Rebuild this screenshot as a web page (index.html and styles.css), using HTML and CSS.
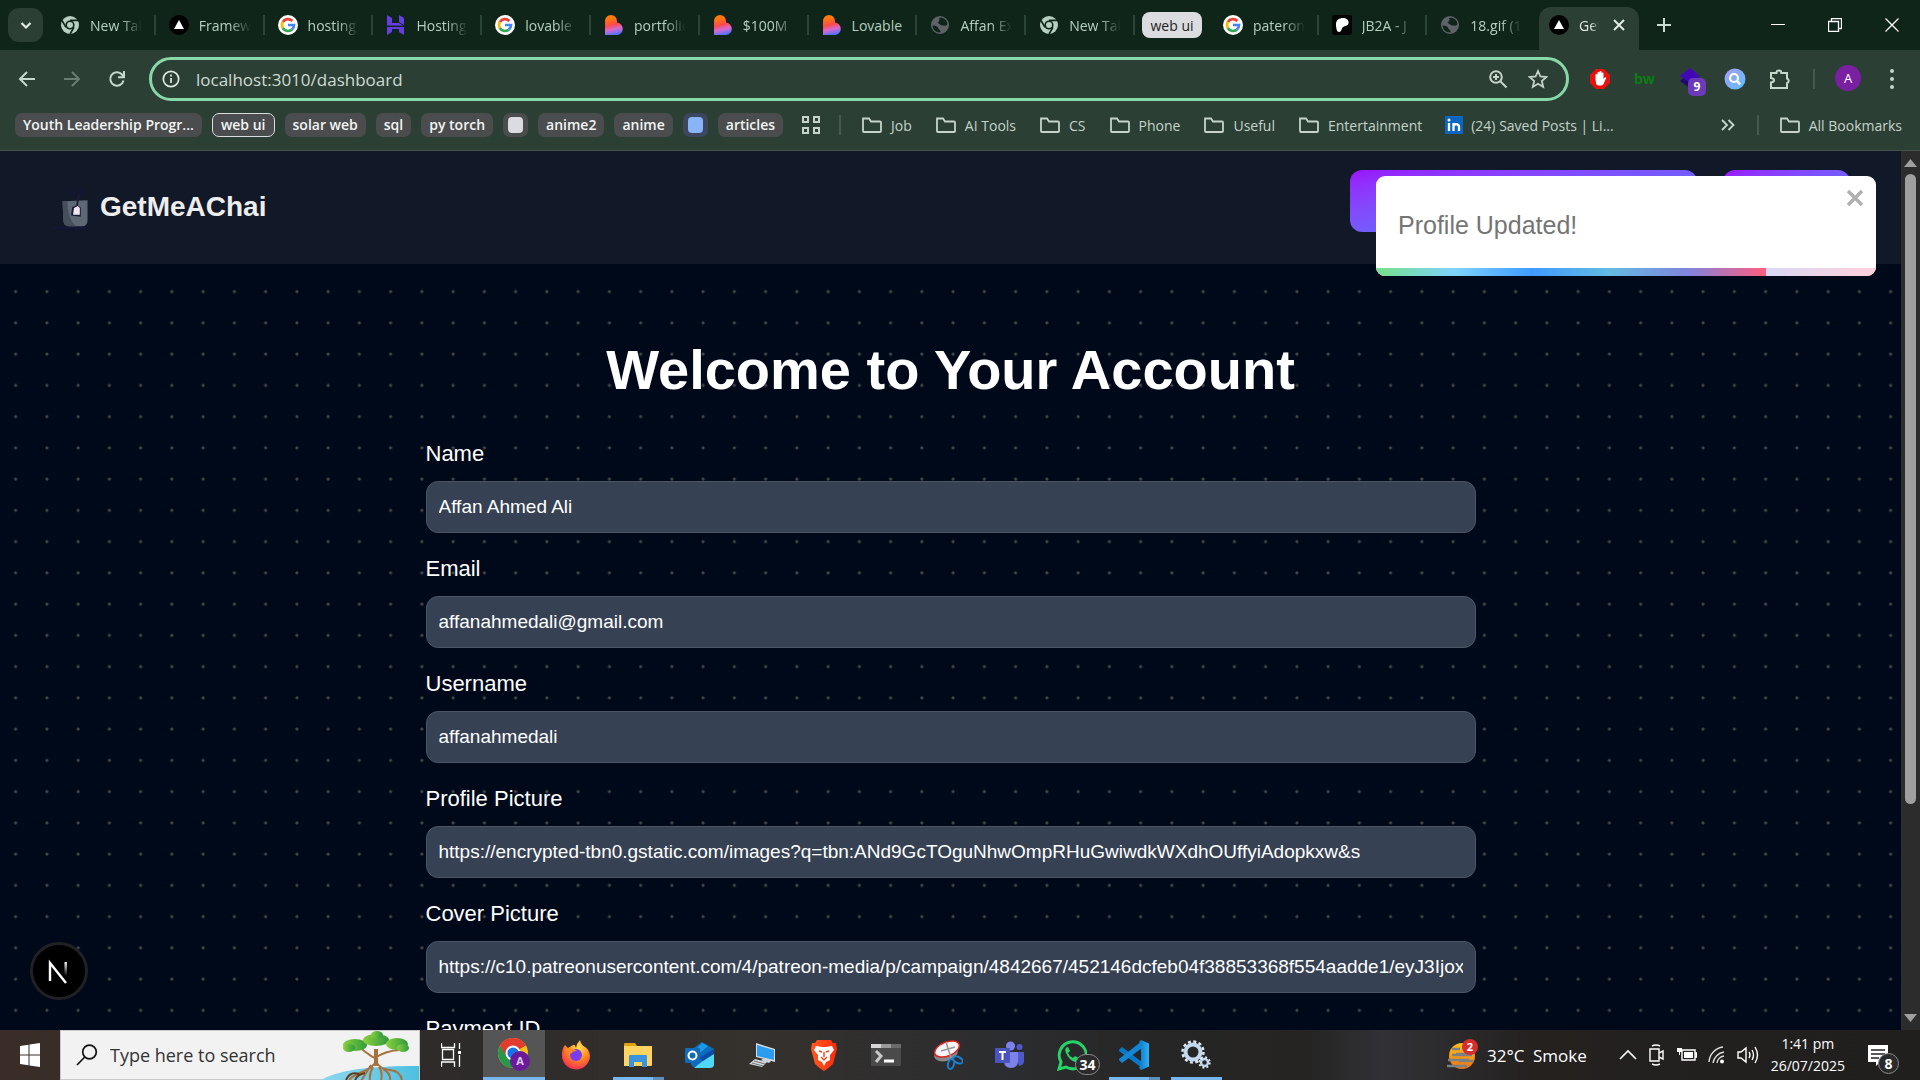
FILE: index.html
```html
<!DOCTYPE html>
<html lang="en">
<head>
<meta charset="utf-8">
<title>GetMeAChai - Dashboard</title>
<link rel="stylesheet" href="styles.css">
</head>
<body>
<svg class="sprite" aria-hidden="true">
  <defs>
    <linearGradient id="lov" x1="0.3" y1="0" x2="0.5" y2="1"><stop offset="0.15" stop-color="#ff7a0a"/><stop offset="0.5" stop-color="#fc4a4f"/><stop offset="0.72" stop-color="#d86ad0"/><stop offset="1" stop-color="#4f73ff"/></linearGradient>
    <linearGradient id="tree" x1="0" x2="1"><stop offset="0" stop-color="#8bd040"/><stop offset="1" stop-color="#2f9a3c"/></linearGradient>
    <linearGradient id="water" x1="0" x2="1"><stop offset="0" stop-color="#8fd8ee"/><stop offset="1" stop-color="#4ebfe0"/></linearGradient>
    <radialGradient id="fox" cx="0.6" cy="0.25" r="0.8"><stop offset="0" stop-color="#ffe14a"/><stop offset="0.5" stop-color="#ff8a1f"/><stop offset="1" stop-color="#f5265a"/></radialGradient>
    <linearGradient id="brave" x1="0" x2="1"><stop offset="0" stop-color="#ff5a1f"/><stop offset="1" stop-color="#f92a0c"/></linearGradient>
    <linearGradient id="vs" x1="0" x2="1"><stop offset="0" stop-color="#0a78c8"/><stop offset="1" stop-color="#2fb0f5"/></linearGradient>
    <linearGradient id="sun" x1="0" y1="0" x2="0" y2="1"><stop offset="0" stop-color="#ffc31a"/><stop offset="1" stop-color="#f0720c"/></linearGradient>
    <linearGradient id="orb" x1="0" y1="0" x2="1" y2="1"><stop offset="0" stop-color="#a89bf2"/><stop offset="1" stop-color="#5cc0ff"/></linearGradient>
    <linearGradient id="nfade" x1="0" y1="0" x2="0" y2="1"><stop offset="0" stop-color="#fff"/><stop offset="1" stop-color="#fff" stop-opacity="0"/></linearGradient>
  </defs>
  <symbol id="i-chrome" viewBox="0 0 20 20"><circle cx="10" cy="10" r="9" fill="#b6cfbf"/><circle cx="10" cy="10" r="4.600" fill="#0f251a"/><circle cx="10" cy="10" r="3" fill="#b6cfbf"/><path d="M10 5.400h8M6 12.300 2 5.500M14 12.300 10 19" stroke="#0f251a" stroke-width="1.600"/></symbol>
  <symbol id="i-vercel" viewBox="0 0 20 20"><circle cx="10" cy="10" r="10"/><path d="M10 5l5 9H5z" fill="#fff"/></symbol>
  <symbol id="i-google" viewBox="0 0 20 20"><circle cx="10" cy="10" r="10" fill="#fff"/><g fill="none" stroke-width="2.700"><path d="M14.400 6A6 6 0 0 0 4.800 7" stroke="#ea4335"/><path d="M4.800 7a6 6 0 0 0 0 6" stroke="#fbbc05"/><path d="M4.800 13a6 6 0 0 0 9 1.600" stroke="#34a853"/><path d="M13.800 14.600A6 6 0 0 0 16 10h-6" stroke="#4285f4"/></g></symbol>
  <symbol id="i-hostinger" viewBox="0 0 20 20"><path d="M1 0l5 3v5h7l5 3H1zM13 0l5 3v7l-5-3zM1 20v-8h13l4 0v8l-5-3v-3H6l0 3z" fill="#673de6"/><path d="M0 11.300h20" stroke="#0f251a" stroke-width="1.500"/></symbol>
  <symbol id="i-lovable" viewBox="0 0 20 20"><path d="M1 20V6a6 6 0 0 1 12 0v1.500A6.300 6.300 0 0 1 13.500 20z" fill="url(#lov)"/></symbol>
  <symbol id="i-globe" viewBox="0 0 20 20"><circle cx="10" cy="10" r="9" fill="#5f6368"/><path d="M2.600 10.500c2 0 5 .5 5.500 2.500s2.500 1 2.500 4.300c-4 .7-8-2.300-8-6.800zM9 3c4-1 8 1.500 8.400 6-1.500 3-2.400 1-4.400 1.500S9.500 9 8 8s3-1.500 1-5z" fill="#0f251a"/></symbol>
  <symbol id="i-patreon" viewBox="0 0 20 20"><rect width="20" height="20" rx="2" fill="#050505"/><path d="M4 9c0-4 3.500-6 7-6 3 0 5.600 1.500 5.600 4.500 0 4-4.600 3-6.100 5C9.500 14 9.500 17 7 17S4 12 4 9z" fill="#fff"/></symbol>
  <symbol id="i-folder" viewBox="0 0 22 20"><path d="M2 3.500h6l2 3h9a1 1 0 0 1 1 1V16a1 1 0 0 1-1 1H3a1 1 0 0 1-1-1z" fill="none" stroke="#c5d3c9" stroke-width="1.800"/></symbol>
</svg>

<header class="browser">
  <div class="tabstrip">
    <button class="tab-search" aria-label="Search tabs"><svg width="14" height="14" viewBox="0 0 14 14"><path d="M2.500 5L7 9.500 11.500 5" fill="none" stroke="#e1ece4" stroke-width="2.200"/></svg></button>
    <nav class="tabs tabs-main">
      <a class="tab" href="#"><svg><use href="#i-chrome"/></svg><span>New Tab</span></a>
      <a class="tab" href="#"><svg><use href="#i-vercel"/></svg><span>Framew</span></a>
      <a class="tab" href="#"><svg><use href="#i-google"/></svg><span>hosting</span></a>
      <a class="tab" href="#"><svg><use href="#i-hostinger"/></svg><span>Hosting</span></a>
      <a class="tab" href="#"><svg><use href="#i-google"/></svg><span>lovable</span></a>
      <a class="tab" href="#"><svg><use href="#i-lovable"/></svg><span>portfolio</span></a>
      <a class="tab" href="#"><svg><use href="#i-lovable"/></svg><span>$100M</span></a>
      <a class="tab plain" href="#"><svg><use href="#i-lovable"/></svg><span>Lovable</span></a>
      <a class="tab" href="#"><svg><use href="#i-globe"/></svg><span>Affan Ex</span></a>
      <a class="tab" href="#"><svg><use href="#i-chrome"/></svg><span>New Tab</span></a>
    </nav>
    <button class="tab-group">web ui</button>
    <nav class="tabs tabs-group">
      <a class="tab" href="#"><svg><use href="#i-google"/></svg><span>pateron</span></a>
      <a class="tab" href="#"><svg><use href="#i-patreon"/></svg><span>JB2A - J</span></a>
      <a class="tab last" href="#"><svg><use href="#i-globe"/></svg><span>18.gif (1</span></a>
    </nav>
    <div class="tab-active"><svg class="fav"><use href="#i-vercel"/></svg><span>Get</span><button aria-label="Close tab"><svg width="14" height="14" viewBox="0 0 14 14"><path d="M2 2l10 10M12 2L2 12" stroke="#e1ece4" stroke-width="2"/></svg></button></div>
    <button class="new-tab" aria-label="New tab"><svg width="14" height="14" viewBox="0 0 14 14"><path d="M7 0v14M0 7h14" stroke="#c9dacf" stroke-width="2"/></svg></button>
    <div class="window-controls">
      <button aria-label="Minimize"><svg width="14" height="14" viewBox="0 0 14 14"><path d="M0 6.500h14" stroke="#fff"/></svg></button>
      <button aria-label="Restore"><svg width="14" height="14" viewBox="0 0 14 14"><path d="M.5 3.500h10v10H.5zM3.500 3V.5h10v10H11" fill="none" stroke="#fff" stroke-width="1.300"/></svg></button>
      <button aria-label="Close"><svg width="14" height="14" viewBox="0 0 14 14"><path d="M.5.5l13 13M13.500.5l-13 13" stroke="#fff" stroke-width="1.300"/></svg></button>
    </div>
  </div>

  <div class="toolbar">
    <div class="nav-buttons">
      <button aria-label="Back"><svg width="18" height="18" viewBox="0 0 18 18"><path d="M17 9H2M9 2L2 9l7 7" fill="none" stroke="#c5d9cb" stroke-width="2"/></svg></button>
      <button aria-label="Forward"><svg width="18" height="18" viewBox="0 0 18 18"><path d="M1 9h15M9 2l7 7-7 7" fill="none" stroke="#6a7d71" stroke-width="2"/></svg></button>
      <button aria-label="Reload"><svg width="18" height="18" viewBox="0 0 18 18"><path d="M15.500 10.500A6.700 6.700 0 1 1 14 4.500l2 2.500M16 1v6.200h-6" fill="none" stroke="#c5d9cb" stroke-width="2"/></svg></button>
    </div>
    <div class="omnibox">
      <svg width="18" height="18" viewBox="0 0 18 18"><circle cx="9" cy="9" r="7.700" fill="none" stroke="#dfe9e2" stroke-width="1.700"/><path d="M9 8v5M9 4.500v2" stroke="#dfe9e2" stroke-width="1.700"/></svg>
      <input type="text" aria-label="Address" value="localhost:3010/dashboard">
      <svg width="20" height="20" viewBox="0 0 20 20"><circle cx="8" cy="8" r="5.800" fill="none" stroke="#c5d3c9" stroke-width="2"/><path d="M12.300 12.300L18.500 18.500M8 5v6M5 8h6" stroke="#c5d3c9" stroke-width="2"/></svg>
      <svg width="20" height="20" viewBox="0 0 20 20"><path d="M10 2l2.400 5.500 6 .5-4.600 4 1.400 5.900L10 14.800 4.800 17.900 6.200 12 1.600 8l6-.5z" fill="none" stroke="#c5d3c9" stroke-width="1.800"/></svg>
    </div>
    <div class="extensions">
      <svg viewBox="0 0 22 22"><path d="M7 1h8l6 6v8l-6 6H7l-6-6V7z" fill="#e8110f"/><path d="M6.500 11.500V7a1 1 0 0 1 2 0V5a1 1 0 0 1 2 0V4a1 1 0 0 1 2 0v1.500a1 1 0 0 1 2 0V11l1.200-1.500c1-.8 1.800 0 1.400.8L14.500 16c-1 2-6 2-7.300 0z" fill="#fff"/></svg>
      <span class="bw">bw</span>
      <span class="stack"><svg viewBox="0 0 22 22"><path d="M11 5l10 7-10 8-10-7z" fill="#1d0a6b"/><path d="M11 0l10 8-10 7L1 8z" fill="#4208b8"/></svg><b>9</b></span>
      <svg viewBox="0 0 22 22"><circle cx="11" cy="11" r="10.500" fill="url(#orb)"/><circle cx="10" cy="10" r="4" fill="none" stroke="#fff" stroke-width="2.200"/><path d="M13 13l3 3.500" stroke="#fff" stroke-width="2.400"/></svg>
      <svg viewBox="0 0 22 22"><path d="M2 5h5.500a2.400 2.400 0 0 1 4.800 0H18v5.500a2.400 2.400 0 0 1 0 4.600V20H2v-5.500c4-.5 4-4 0-4.500z" fill="none" stroke="#c5d9cb" stroke-width="2"/></svg>
    </div>
    <i class="rule"></i>
    <button class="avatar" aria-label="Profile">A</button>
    <button class="menu" aria-label="Menu"><svg width="6" height="22" viewBox="0 0 6 22"><g fill="#c5d9cb"><circle cx="3" cy="3" r="2"/><circle cx="3" cy="11" r="2"/><circle cx="3" cy="19" r="2"/></g></svg></button>
  </div>

  <div class="bookmarks">
    <div class="chips">
      <button>Youth Leadership Progr...</button>
      <button class="open">web ui</button>
      <button>solar web</button>
      <button>sql</button>
      <button>py torch</button>
      <button class="dot grey" aria-label="Grey group"><i></i></button>
      <button>anime2</button>
      <button>anime</button>
      <button class="dot blue" aria-label="Blue group"><i></i></button>
      <button>articles</button>
    </div>
    <svg class="apps" width="20" height="20" viewBox="0 0 20 20"><path d="M2 2h5v5H2zM13 2h5v5h-5zM2 13h5v5H2zM13 13h5v5h-5z" fill="none" stroke="#c5d3c9" stroke-width="2"/></svg>
    <i class="rule"></i>
    <nav class="folders">
      <a href="#"><svg><use href="#i-folder"/></svg>Job</a>
      <a href="#"><svg><use href="#i-folder"/></svg>AI Tools</a>
      <a href="#"><svg><use href="#i-folder"/></svg>CS</a>
      <a href="#"><svg><use href="#i-folder"/></svg>Phone</a>
      <a href="#"><svg><use href="#i-folder"/></svg>Useful</a>
      <a href="#"><svg><use href="#i-folder"/></svg>Entertainment</a>
      <a href="#"><svg class="in" viewBox="0 0 18 20"><rect y="1" width="18" height="18" rx="1" fill="#0a66c2"/><path d="M4 8v8M8.500 16V8M8.500 12c0-3.500 5.500-4 5.500 0v4" fill="none" stroke="#fff" stroke-width="2.300"/><circle cx="4" cy="5" r="1.500" fill="#fff"/></svg>(24) Saved Posts | Li...</a>
    </nav>
    <button class="more" aria-label="More bookmarks"><svg width="14" height="12" viewBox="0 0 14 12"><path d="M1 1l5 5-5 5M7.500 1l5 5-5 5" fill="none" stroke="#c5d9cb" stroke-width="1.800"/></svg></button>
    <i class="rule"></i>
    <a class="all" href="#"><svg><use href="#i-folder"/></svg>All Bookmarks</a>
  </div>
</header>

<div class="window">
  <div class="viewport">
    <header class="site-nav">
      <a class="brand" href="#">
        <svg width="52" height="52" viewBox="0 0 52 52"><path d="M18 5l1 8M25 5l1 8M31 5l1 8M1 47h38" stroke="#14163a" stroke-width="2"/><path d="M13 19l26-1v21q0 6-6 6H20q-6 0-6-6z" fill="#5e6874"/><path d="M13 19h5q0 18 9 26h-7q-6 0-6-6z" fill="#464e5b"/><path d="M30 12l-2 12-4 2-1 7 8 1V26l-3-2" fill="none" stroke="#191b38" stroke-width="2"/><path d="M25 26l4-2 2 2v7h-7z" fill="#efe6f2"/></svg>
        GetMeAChai
      </a>
      <div class="site-actions">
        <button class="wide" aria-label="Account"></button>
        <button class="short" aria-label="Log out"></button>
      </div>
    </header>

    <main class="account">
      <h1>Welcome to Your Account</h1>
      <form>
        <label for="name">Name</label>
        <input id="name" type="text" value="Affan Ahmed Ali">
        <label for="email">Email</label>
        <input id="email" type="text" value="affanahmedali@gmail.com">
        <label for="username">Username</label>
        <input id="username" type="text" value="affanahmedali">
        <label for="profile">Profile Picture</label>
        <input id="profile" type="text" value="https://encrypted-tbn0.gstatic.com/images?q=tbn:ANd9GcTOguNhwOmpRHuGwiwdkWXdhOUffyiAdopkxw&amp;s">
        <label for="cover">Cover Picture</label>
        <input id="cover" type="text" value="https://c10.patreonusercontent.com/4/patreon-media/p/campaign/4842667/452146dcfeb04f38853368f554aadde1/eyJ3IjoxNjAwfQ">
        <label for="payment">Payment ID</label>
        <input id="payment" type="text">
      </form>
    </main>

    <div class="toast" role="status">
      <p>Profile Updated!</p>
      <button aria-label="Close"><svg width="18" height="18" viewBox="0 0 18 18"><path d="M2 2l14 14M16 2L2 16" stroke="#b0b0b0" stroke-width="3.400"/></svg></button>
      <div class="progress"><i style="width:78%"></i></div>
    </div>

    <button class="dev-badge" aria-label="Next.js tools"><svg width="26" height="26" viewBox="0 0 26 26"><path d="M4 23V5L20 25" fill="none" stroke="#fff" stroke-width="2.400"/><rect x="18.500" y="4" width="2.400" height="14" fill="url(#nfade)"/></svg></button>
  </div>
  <div class="scrollbar">
    <svg width="13" height="8" viewBox="0 0 13 8"><path d="M6.500 0L13 8H0z" fill="#9f9f9f"/></svg>
    <div class="track"><i></i></div>
    <svg width="13" height="8" viewBox="0 0 13 8"><path d="M6.500 8L13 0H0z" fill="#9f9f9f"/></svg>
  </div>
</div>

<footer class="taskbar">
  <button class="start" aria-label="Start"><svg width="20" height="24" viewBox="0 0 20 24"><path d="M0 3l8.500-1.300V11.500H0zM9.500 1.500L20 0v11.500H9.500zM0 12.500h8.500v9.800L0 21zM9.500 12.500H20V24L9.500 22.500z" fill="#fff"/></svg></button>
  <label class="search">
    <svg width="22" height="22" viewBox="0 0 22 22"><circle cx="13.500" cy="8" r="6.800" fill="none" stroke="#111" stroke-width="1.700"/><path d="M8.800 13L1 21" stroke="#111" stroke-width="1.700"/></svg>
    <input type="text" placeholder="Type here to search">
    <svg class="mangrove" width="100" height="50" viewBox="0 0 100 50"><path d="M0 50Q25 34 100 35V50z" fill="url(#water)"/><g fill="none" stroke="#a8713c" stroke-width="2"><path d="M40 16Q54 27 56 27Q66 20 80 19" stroke-width="2"/><path d="M57 18v12q-2 6-14 11T30 50M57 30q3 8 14 9t12 11M52 34Q42 50 42 50M60 36q4 5 2 14M54 36q-4 6-3 14M64 38q8 4 7 12"/><path d="M57 18v17" stroke-width="4"/><path d="M27 49q4-9 13-6M36 50q1-6 10-8" stroke="#5c3a1a"/></g><g fill="url(#tree)"><ellipse cx="36" cy="14" rx="12" ry="6"/><ellipse cx="30" cy="17" rx="6" ry="4"/><ellipse cx="57" cy="9" rx="13" ry="6"/><ellipse cx="58" cy="4" rx="6" ry="4"/><ellipse cx="78" cy="13" rx="11" ry="6"/><ellipse cx="84" cy="17" rx="6" ry="4"/></g></svg>
  </label>
  <nav class="apps-row">
    <button aria-label="Task view"><svg width="22" height="24" viewBox="0 0 22 24"><path d="M.5 0v4.500h13V0M1.500 6.500h11v10h-11zM.5 24v-5h13v5M18.500 0v6M18.500 12v12" fill="none" stroke="#fff" stroke-width="1.300"/><rect x="17" y="8" width="3" height="3" fill="#fff"/></svg></button>
    <button class="current" aria-label="Chrome"><svg width="34" height="34" viewBox="0 0 34 34"><circle cx="16" cy="15" r="15" fill="#fbc116"/><path d="M16 15L3 7.500A15 15 0 0 1 29 7.500z" fill="#e33b2e"/><path d="M3 7.500A15 15 0 0 0 15 30L20 20 10 17z" fill="#279847"/><path d="M3 7.500h26H16L9 18z" fill="#e33b2e"/><circle cx="16" cy="15" r="7.500" fill="#fff"/><circle cx="16" cy="15" r="5.600" fill="#1a73e8"/><circle cx="23" cy="23" r="10" fill="#6a1b9a"/><text x="23" y="27" text-anchor="middle" class="svg-a">A</text></svg></button>
    <button aria-label="Firefox"><svg width="30" height="30" viewBox="0 0 30 30"><path d="M1 15Q1 8 4 5l3 3 5-3q2-1 3 3l1-4 3-4q1 5 5 7t5 9A14 14 0 0 1 1 15z" fill="url(#fox)"/><circle cx="15" cy="15" r="6" fill="#7a3cf0"/><path d="M3 9q8-2 13 2-5 0-6 3-3-2-7-5z" fill="#ff8a1f"/></svg></button>
    <button class="running multi" aria-label="File Explorer"><svg width="30" height="26" viewBox="0 0 30 26"><path d="M1 2q0-1 1-1h10l2 3H1z" fill="#e0a10f"/><path d="M1 4h28v19q0 1-1 1H1z" fill="#ffd460"/><path d="M6 25V14q0-1 1-1h16q1 0 1 1v11h-5v-5h-8v5z" fill="#3a93dd"/></svg></button>
    <button aria-label="Outlook"><svg width="30" height="30" viewBox="0 0 30 30"><path d="M6 10L17 2l12 7v14q0 4-4 4H10q-4 0-4-4z" fill="#0f6cbd"/><path d="M8 12l9-9 6 3-14 12z" fill="#1a9be8"/><path d="M29 12v12q0 4-4 4H9z" fill="#50d9f5"/><path d="M14 18l15-9v5L18 21z" fill="#0b4ba8"/><rect y="8" width="15" height="15" rx="1" fill="#0f6cbd"/><circle cx="7.500" cy="15.500" r="4" fill="none" stroke="#fff" stroke-width="2"/></svg></button>
    <button aria-label="Remote Desktop"><svg width="30" height="30" viewBox="0 0 30 30"><path d="M9 3l19 6v13L9 17z" fill="#d8dde2"/><path d="M10 5l17 5v10L10 16z" fill="#2a9df0"/><path d="M8 19l12 3-5 5-13-3zM17 18l8 2-3 3-8-3z" fill="#cfd4da"/><path d="M5 23l11 3M7 21l11 3" stroke="#777"/></svg></button>
    <button aria-label="Brave"><svg width="28" height="32" viewBox="0 0 28 32"><path d="M7 1h14l2 3 3 0 1 6-4 15q-4 4-9 7-5-3-9-7L1 10l1-6h3z" fill="url(#brave)"/><path d="M6 7l6 1 2 0 2 0 6-1 2 4-4 5 0 5-4 2-2 4-2-4-4-2 0-5-4-5z" fill="#fff"/><path d="M9 12l3 1M19 12l-3 1M14 13v5M11 18l3 3 3-3" stroke="#f9420f" stroke-width="1.400" fill="none"/></svg></button>
    <button aria-label="Terminal"><svg width="30" height="26" viewBox="0 0 30 26"><rect y="2" width="30" height="22" rx="1" fill="#4a4a4a"/><path d="M0 2h10v4H0z" fill="#d6d6d6"/><path d="M10 2h10v4H10z" fill="#9a9a9a"/><path d="M20 2h10v4H20z" fill="#6a6a6a"/><path d="M5 9l5 5-5 6" fill="none" stroke="#c8c8c8" stroke-width="3"/><path d="M13 19h10" stroke="#fff" stroke-width="3"/></svg></button>
    <button aria-label="Snipping Tool"><svg width="30" height="32" viewBox="0 0 30 32"><ellipse cx="13" cy="15" rx="12" ry="7" transform="rotate(-15 13 15)" fill="#888"/><ellipse cx="14" cy="10" rx="13" ry="7" transform="rotate(-22 14 10)" fill="#f4f4f4" stroke="#d22" stroke-width="1.500"/><path d="M13 3l5 16M8 12l14-4" stroke="#999" stroke-width="1.500"/><g fill="none" stroke="#1a7fd0" stroke-width="2"><ellipse cx="18" cy="25" rx="3" ry="5" transform="rotate(15 18 25)"/><ellipse cx="25" cy="21" rx="5" ry="3" transform="rotate(25 25 21)"/></g></svg></button>
    <button aria-label="Teams"><svg width="30" height="30" viewBox="0 0 30 30"><circle cx="24.500" cy="7" r="3" fill="#5059c9"/><circle cx="15.500" cy="6" r="4.500" fill="#7b83eb"/><path d="M20 12h9v9q0 4-5 5z" fill="#5059c9"/><path d="M9 12h14v9q0 7-7 7t-7-7z" fill="#7b83eb"/><rect y="8" width="15" height="15" rx="1" fill="#4b53bc"/><path d="M4 12h7M7.500 12v8" stroke="#fff" stroke-width="2"/></svg></button>
    <button aria-label="WhatsApp"><svg width="30" height="32" viewBox="0 0 30 32"><path d="M2 30l2-7A13.500 13.500 0 1 1 9 28z" fill="none" stroke="#25d366" stroke-width="3"/><path d="M10 8q-3 2-1 6 3 7 9 9 4 0 4-4l-4-2-2 2q-4-2-5-5l2-2-2-4z" fill="#25d366"/></svg><b class="count">34</b></button>
    <button class="running multi" aria-label="Visual Studio Code"><svg width="30" height="30" viewBox="0 0 30 30"><path d="M0 10l3-3 20 15v6L0 11z" fill="#0a78c8"/><path d="M0 20l3 3L23 8V1L0 19z" fill="#1487d4"/><path d="M22 0l8 3.500v23L22 30l-2-2 2-5V7l-2-5z" fill="url(#vs)"/></svg></button>
    <button class="running" aria-label="Settings"><svg width="30" height="30" viewBox="0 0 30 30"><circle cx="12" cy="12" r="7.500" fill="none" stroke="#c3d8ec" stroke-width="4"/><circle cx="12" cy="12" r="10.500" fill="none" stroke="#dce9f5" stroke-width="2.400" stroke-dasharray="3 2.500"/><circle cx="23.500" cy="22.500" r="3.500" fill="none" stroke="#c3d8ec" stroke-width="2.400"/><circle cx="23.500" cy="22.500" r="5.300" fill="none" stroke="#dce9f5" stroke-width="1.800" stroke-dasharray="2 2.160"/></svg></button>
  </nav>
  <div class="tray">
    <span class="weather"><svg width="32" height="32" viewBox="0 0 32 32"><circle cx="15" cy="17" r="13" fill="url(#sun)"/><path d="M5 10h8M9 15h15M5 16h20M1 21h21M12 22h14M0 27h20" stroke="#7a8088" stroke-width="2.400"/><circle cx="23" cy="8" r="8" fill="#d32f2f"/><text x="23" y="12" text-anchor="middle" class="svg-2">2</text></svg>32°C&ensp;Smoke</span>
    <span class="status">
      <svg width="18" height="22" viewBox="0 0 18 22"><path d="M1 15l8-8 8 8" fill="none" stroke="#fff" stroke-width="1.600"/></svg>
      <svg width="18" height="22" viewBox="0 0 18 22"><path d="M2 5h9v12H2zM11 9l4-2v8l-4-2M4 2q4-2 8 0M4 20q4 2 8 0" fill="none" stroke="#fff" stroke-width="1.400"/></svg>
      <svg width="20" height="22" viewBox="0 0 20 22"><path d="M5 6h13v10H5zM18 9h1.500v4H18" fill="none" stroke="#fff" stroke-width="1.400"/><path d="M7 8h9v6H7zM0 4h5v4H3v3H2V8H0z" fill="#fff"/></svg>
      <svg width="18" height="22" viewBox="0 0 18 22"><path d="M1 18A16 16 0 0 1 15 3M5 19A13 13 0 0 1 16 8M9 19a8 8 0 0 1 7-7" fill="none" stroke="#ddd" stroke-width="1.400"/><circle cx="14" cy="17.500" r="2" fill="#fff"/></svg>
      <svg width="22" height="22" viewBox="0 0 22 22"><path d="M1 8h3l5-4v14l-5-4H1zM12 8q2 3 0 6M15 6q3 5 0 10M18 3q5 8 0 16" fill="none" stroke="#fff" stroke-width="1.400"/></svg>
    </span>
    <span class="clock"><span>1:41 pm</span><span>26/07/2025</span></span>
    <button class="notify" aria-label="Notifications"><svg width="20" height="24" viewBox="0 0 20 24"><path d="M0 2h20v17H12l-4 4v-4H0z" fill="#fff"/><path d="M3 7h14M3 11h14M3 15h8" stroke="#222" stroke-width="1.500"/></svg><b class="count">8</b></button>
  </div>
</footer>
</body>
</html>
```
FILE: styles.css
```css
* { box-sizing: border-box; }
body {
  margin: 0;
  height: 100vh;
  display: flex;
  flex-direction: column;
  overflow: hidden;
  background: #00091a;
  color: #fff;
  font-family: "Open Sans", "Noto Sans", sans-serif;
}
button { border: 0; padding: 0; margin: 0; background: none; color: inherit; font: inherit; }
a { color: inherit; text-decoration: none; }
svg { display: block; flex: none; }
input { min-width: 0; border: 0; outline: 0; background: none; font: inherit; color: inherit; }
.sprite { position: absolute; width: 0; height: 0; }
.rule { flex: none; width: 2px; height: 20px; background: #46594d; }

/* Browser chrome */
.browser { flex: none; background: #2b3f35; border-bottom: 1px solid #43544a; }
.tabstrip { display: flex; height: 50px; background: #0f251a; font-size: 14px; color: #b6cfbf; }
.tab-search {
  flex: none;
  display: grid;
  place-items: center;
  width: 35px;
  height: 34px;
  margin: 8px 4px 0 8px;
  border-radius: 11px;
  background: #2b3f35;
}
.tabs { display: flex; min-width: 0; }
.tabs-main { flex: 0 1 1088px; }
.tabs-group { flex: 0 1 326px; }
.tab {
  flex: 1 1 0;
  min-width: 0;
  display: flex;
  align-items: center;
  gap: 10px;
  padding: 0 14px 0 13px;
  background: linear-gradient(#2b4436, #2b4436) right 15px / 2px 20px no-repeat;
}
.tab.last { background: none; }
.tab svg, .fav { width: 20px; height: 20px; }
.tab span, .tab-active span {
  flex: 1;
  overflow: hidden;
  white-space: nowrap;
  -webkit-mask-image: linear-gradient(90deg, #000 60%, transparent);
  mask-image: linear-gradient(90deg, #000 60%, transparent);
}
.tab.plain span { -webkit-mask-image: none; mask-image: none; }
.tab-group {
  flex: none;
  width: 60px;
  height: 26px;
  margin: 12px 8px 0 7px;
  border-radius: 8px;
  background: #dadce0;
  color: #222;
}
.tab-active {
  flex: none;
  display: flex;
  align-items: center;
  gap: 10px;
  width: 100px;
  height: 43px;
  margin: 7px 0 0 3px;
  padding: 0 13px 0 10px;
  border-radius: 12px 12px 0 0;
  background: #2b3f35;
  color: #e1ece4;
}
.tab-active > * { margin-bottom: 7px; }
.tab-active span { flex: 0 0 20px; }
.tab-active button { margin-left: auto; }
.new-tab { flex: none; width: 50px; height: 50px; display: grid; place-items: center; }
.window-controls { display: flex; margin-left: auto; }
.window-controls button { width: 57px; display: grid; place-items: center; }

.toolbar { display: flex; align-items: center; height: 58px; padding: 0 19px 0 18px; }
.nav-buttons { display: flex; gap: 27px; width: 131px; }
.omnibox {
  flex: 1;
  display: flex;
  align-items: center;
  gap: 20px;
  height: 44px;
  padding: 0 18px 0 10px;
  border: 3px solid #88d7a6;
  border-radius: 22px;
  font-size: 17px;
  color: #cfdcd3;
}
.omnibox input { flex: 1; padding: 0; margin-left: -4px; }
.extensions { display: flex; align-items: center; gap: 23px; margin: 0 22px 0 20px; }
.extensions svg { width: 22px; height: 22px; }
.bw { width: 22px; font-size: 14px; font-weight: 700; line-height: 22px; color: #0b7d12; }
.stack { position: relative; }
.stack b {
  position: absolute;
  left: 9px;
  top: 10px;
  width: 18px;
  height: 18px;
  border-radius: 5px;
  background: #6a3ab8;
  font-size: 12px;
  line-height: 18px;
  text-align: center;
}
.avatar { width: 26px; height: 26px; margin: 0 22px 2px 20px; border-radius: 50%; background: #7b1fa2; font-size: 13px; }
.menu { width: 18px; display: grid; place-items: center; }

.bookmarks { display: flex; align-items: center; height: 42px; padding: 0 18px 8px 15px; font-size: 14px; color: #c5d3c9; white-space: nowrap; }
.chips { display: flex; gap: 10px; }
.chips button { height: 24px; padding: 0 8px; border-radius: 7px; background: #4a4c4e; color: #f2f4f3; font-size: 14px; font-weight: 600; line-height: 22px; }
.chips .open { border: 1px solid #dadce0; }
.chips .dot { width: 25px; padding: 0 5px; }
.chips .dot i { display: block; height: 16px; border-radius: 4px; background: #dadce0; }
.chips .blue { background: #3c465c; }
.chips .blue i { background: #8ab4f8; }
.apps { margin: 0 18px; }
.folders { display: flex; gap: 23px; margin-left: 20px; }
.folders a, .all { display: flex; align-items: center; gap: 8px; }
.folders svg, .all svg { width: 22px; height: 20px; }
.folders .in { width: 18px; }
.more { margin: 0 22px 0 auto; }
.all { margin-left: 20px; }

/* Page */
.window { flex: 1; min-height: 0; display: flex; font-family: "Liberation Sans", Arial, sans-serif; }
.viewport {
  position: relative;
  flex: 1;
  min-width: 0;
  overflow: hidden;
  background: radial-gradient(circle, #484848 1px, transparent 2px) 0 0 / calc(125px / 4) calc(125px / 4) #00091a;
}
.site-nav { display: flex; justify-content: space-between; height: 113px; padding: 19px 51px 0 50px; background: #111827; }
.brand { display: flex; font-size: 28px; font-weight: 700; line-height: 73px; color: #ededed; }
.brand svg { width: 50px; margin-top: 12px; }
.site-actions { display: flex; gap: 26px; }
.site-actions button { height: 62px; border-radius: 12px; background: linear-gradient(to bottom right in oklab, #9810fa, #2b7fff); }
.site-actions .wide { width: 347px; }
.site-actions .short { width: 127px; }
.account { display: flex; flex-direction: column; align-items: center; padding-top: 75px; }
.account h1 { margin: 0; font-size: 56px; line-height: 62px; }
.account form { width: 1050px; max-width: 90%; margin-top: 37px; display: flex; flex-direction: column; }
.account label { font-size: 22px; line-height: 32px; margin-bottom: 11px; }
.account form input {
  height: 52px;
  margin-bottom: 20px;
  padding: 0 12px;
  border: 1px solid #4a5565;
  border-radius: 12px;
  background: #364153;
  font-size: 19px;
}
.toast {
  position: absolute;
  top: 25px;
  right: 25px;
  width: 500px;
  height: 100px;
  overflow: hidden;
  border-radius: 9px;
  background: #fff;
  color: #757575;
}
.toast p { margin: 0; padding: 0 22px; font-size: 25px; line-height: 98px; }
.toast button { position: absolute; top: 13px; right: 12px; }
.progress { position: absolute; left: 0; right: 0; bottom: 0; height: 8px; background: linear-gradient(90deg, #d8d8f6 78%, #ffd0d9); }
.progress i { display: block; height: 8px; background: linear-gradient(90deg, #76e08a, #7fd4fb 20%, #3f9bff 40%, #63bbe2 60%, #8084dd 80%, #ff5e7c); }
.dev-badge {
  position: absolute;
  left: 30px;
  bottom: 30px;
  width: 58px;
  height: 58px;
  display: grid;
  place-items: center;
  border: 3px solid #202124;
  border-radius: 50%;
  background: #000;
}
.scrollbar { flex: none; width: 19px; display: flex; flex-direction: column; align-items: center; padding: 8px 0; background: #2c2c2c; }
.track { flex: 1; width: 11px; padding-top: 7px; }
.track i { display: block; height: 75%; border-radius: 6px; background: #9f9f9f; }

/* Taskbar */
.taskbar { flex: none; display: flex; height: 50px; background: linear-gradient(90deg, #3a2d28, #2d2b2a 25%, #35312d 39%, #2c2d30 52%, #262626 60%, #252422 68%, #313136 72%, #24211f 80%, #201f1e); }
.start { width: 60px; display: grid; place-items: center; }
.search { display: flex; align-items: center; width: 360px; padding-left: 15px; border: 1px solid #c9c9c9; background: #f2f2f2; }
.search input { flex: 1; padding: 0 0 0 12px; font-size: 18px; color: #222; }
.search input::placeholder { color: #333; opacity: 1; }
.mangrove { flex: none; align-self: flex-start; }
.apps-row { display: flex; }
.apps-row button { position: relative; width: 62px; display: grid; place-items: center; }
.apps-row .current { background: #555; box-shadow: inset 0 -3px #78b6ee; }
.apps-row button:first-child { width: 63px; }
.apps-row .running { background: linear-gradient(#78b6ee, #78b6ee) center bottom / 51px 3px no-repeat; }
.apps-row .multi { background: linear-gradient(90deg, #78b6ee 40px, #5f8fb8 40px) center bottom / 51px 3px no-repeat; }
.count {
  position: absolute;
  width: 25px;
  height: 21px;
  border: 1px solid #8a8a8a;
  border-radius: 11px;
  background: #2b2b2b;
  font-size: 14px;
  line-height: 19px;
  text-align: center;
}
.apps-row .count { left: 34px; top: 24px; }
.svg-a { font: 700 11px "Open Sans", sans-serif; fill: #e0c8ee; }
.svg-2 { font: 700 11px "Open Sans", sans-serif; fill: #fff; }
.tray { display: flex; align-items: center; margin-left: auto; padding-right: 20px; white-space: nowrap; }
.weather { display: flex; align-items: center; gap: 8px; font-size: 17px; }
.status { display: flex; align-items: center; gap: 11px; margin-left: 32px; }
.clock { display: grid; justify-items: center; margin-left: 12px; font-size: 14px; line-height: 22px; }
.notify { position: relative; margin-left: 23px; width: 32px; }
.notify .count { left: 10px; top: 10px; width: 21px; }
```
